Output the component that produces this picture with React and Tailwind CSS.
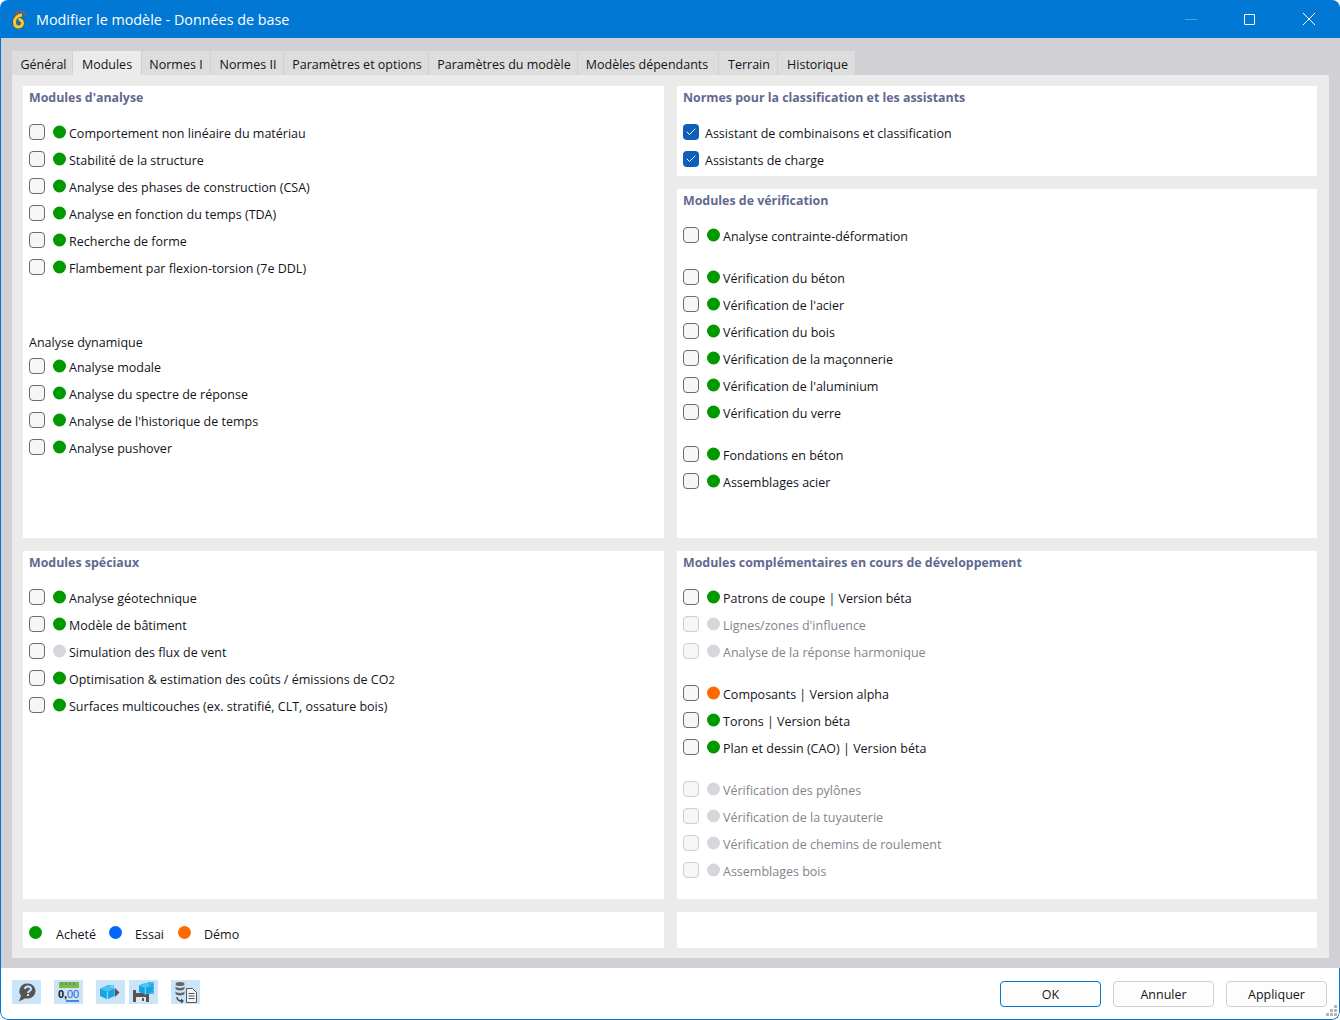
import { Check } from "lucide-react";

const GREEN = "bg-[#009900]";
const GREY = "bg-[#d6d6dc]";
const ORANGE = "bg-[#ff6a00]";

const TABS = [
  ["Général", "w-[61px] pl-[3px]"],
  ["Modules", "w-[69px]"],
  ["Normes I", "w-[69px]"],
  ["Normes II", "w-[73px] pl-[2px]"],
  ["Paramètres et options", "w-[145px] pl-[2px]"],
  ["Paramètres du modèle", "w-[149px] pl-[2px]"],
  ["Modèles dépendants", "w-[141px] pr-[2px]"],
  ["Terrain", "w-[59px] pl-[2px]"],
  ["Historique", "w-[78px] pl-[2px]"],
];

function Row({ label, dot = GREEN, disabled, checked, className = "" }) {
  return (
    <div className={`flex h-[27px] items-center ${className}`}>
      {checked ? (
        <span className="flex h-4 w-4 -translate-y-px items-center justify-center rounded-[4px] bg-[#0f5fb8]">
          <Check className="h-3 w-3 text-white" strokeWidth={2} />
        </span>
      ) : (
        <span
          className={`h-4 w-4 -translate-y-px rounded-[4px] border bg-[#f6f6f6] ${
            disabled ? "border-[#cfcfcf]" : "border-[#6b6b6b]"
          }`}
        />
      )}
      {dot && <span className={`ml-2 h-[13px] w-[13px] -translate-y-[0.5px] rounded-full ${dot}`} />}
      <span
        className={`${dot ? "ml-[3px]" : "ml-[6px]"} translate-y-0.5 whitespace-nowrap ${
          disabled ? "text-[#85848c]" : "text-[#14141a]"
        }`}
      >
        {label}
      </span>
    </div>
  );
}

function Panel({ title, children, className = "" }) {
  return (
    <section className={`bg-white px-[6px] ${className}`}>
      {title && (
        <h2 className="flex h-[25px] items-center text-[12.4px] font-bold text-[#62698f]">{title}</h2>
      )}
      <div className="pt-[8px]">{children}</div>
    </section>
  );
}

function IconButton({ children }) {
  return (
    <button className="flex h-6 w-[29px] items-center justify-center bg-[#cce4f7]">{children}</button>
  );
}

function Button({ label, primary }) {
  return (
    <button
      className={`h-[26px] w-[101px] rounded-[4px] border bg-[#fdfdfd] pt-[3px] text-[#14141a] ${
        primary ? "border-[#0078d4]" : "border-[#cfcfcf]"
      }`}
    >
      {label}
    </button>
  );
}

function Cube({ x = 0, y = 0, s = 1 }) {
  return (
    <g transform={`translate(${x} ${y}) scale(${s})`}>
      <path d="M0 4 7 1l7 3v7l-7 3-7-3z" fill="#12a5e6" />
      <path d="M7 1l7 3-7 3-7-3z" fill="#4cc3f0" />
      <path d="M7 7v7" stroke="#cfefff" strokeWidth=".8" />
    </g>
  );
}

export default function App() {
  return (
    <div className="relative h-[1020px] w-[1340px] overflow-hidden rounded-lg bg-white font-['Open_Sans','Noto_Sans',sans-serif] text-[12.5px]">
      <header className="flex h-[38px] items-center bg-[#0078d4] pl-[10px] text-white">
        <svg viewBox="0 0 18 20" className="h-5 w-[18px]">
          <path d="M3 7 7 1l8 1 3 6-6-3-5 1z" fill="#56698a" />
          <path
            d="M12 6C8 6 4.500 9 4.500 13c0 3 1.500 5 4 5s4-2 4-4-2-4-4-3.500"
            fill="none"
            stroke="#5d5a38"
            strokeWidth="4.600"
          />
          <path
            d="M12 6C8 6 4.500 9 4.500 13c0 3 1.500 5 4 5s4-2 4-4-2-4-4-3.500"
            fill="none"
            stroke="#f5cb3c"
            strokeWidth="3"
          />
        </svg>
        <h1 className="ml-[8px] translate-y-px text-[14.35px]">Modifier le modèle - Données de base</h1>
        <div className="ml-auto flex items-center">
          <span className="h-px w-3 bg-[#4ba3e3]" />
          <span className="ml-[47px] h-[11px] w-[11px] rounded-[1px] border border-white" />
          <svg viewBox="0 0 12 12" className="ml-[48px] mr-[25px] h-3 w-3" stroke="white" strokeWidth="1">
            <path d="M0 0 12 12M12 0 0 12" />
          </svg>
        </div>
      </header>

      <main className="h-[930px] border-l border-l-[#0078d4] bg-[#d1d0d5] pb-[10px] pl-[11px] pr-[11px] pt-[13px]">
        <nav className="flex h-6 items-stretch">
          {TABS.map(([label, width]) => (
            <div
              key={label}
              className={`flex items-center justify-center whitespace-nowrap border-r border-r-[#d1d0d5] pt-[4px] text-[#14141a] ${width} ${
                label === "Modules" ? "bg-[#ebebeb]" : "bg-[#dddddd]"
              }`}
            >
              {label}
            </div>
          ))}
        </nav>

        <div className="grid h-[883px] grid-cols-[641px_640px] grid-rows-[452px_348px_36px] gap-x-[13px] gap-y-[13px] bg-[#ebebeb] px-[11px] pt-[11px]">
          <Panel title="Modules d'analyse">
            <Row label="Comportement non linéaire du matériau" />
            <Row label="Stabilité de la structure" />
            <Row label="Analyse des phases de construction (CSA)" />
            <Row label="Analyse en fonction du temps (TDA)" />
            <Row label="Recherche de forme" />
            <Row label="Flambement par flexion-torsion (7e DDL)" />
            <div className="mt-[47px] flex h-[27px] translate-y-0.5 items-center text-[#14141a]">Analyse dynamique</div>
            <div className="-mt-[2px]">
              <Row label="Analyse modale" />
              <Row label="Analyse du spectre de réponse" />
              <Row label="Analyse de l'historique de temps" />
              <Row label="Analyse pushover" />
            </div>
          </Panel>

          <div className="flex flex-col gap-[13px]">
            <Panel title="Normes pour la classification et les assistants" className="h-[90px]">
              <Row checked dot={null} label="Assistant de combinaisons et classification" />
              <Row checked dot={null} label="Assistants de charge" />
            </Panel>
            <Panel title="Modules de vérification" className="flex-1">
              <Row label="Analyse contrainte-déformation" />
              <Row className="mt-[15px]" label="Vérification du béton" />
              <Row label="Vérification de l'acier" />
              <Row label="Vérification du bois" />
              <Row label="Vérification de la maçonnerie" />
              <Row label="Vérification de l'aluminium" />
              <Row label="Vérification du verre" />
              <Row className="mt-[15px]" label="Fondations en béton" />
              <Row label="Assemblages acier" />
            </Panel>
          </div>

          <Panel title="Modules spéciaux">
            <Row label="Analyse géotechnique" />
            <Row label="Modèle de bâtiment" />
            <Row dot={GREY} label="Simulation des flux de vent" />
            <Row label={<>Optimisation &amp; estimation des coûts / émissions de CO<span className="text-[11px]">2</span></>} />
            <Row label="Surfaces multicouches (ex. stratifié, CLT, ossature bois)" />
          </Panel>

          <Panel title="Modules complémentaires en cours de développement">
            <Row label="Patrons de coupe | Version béta" />
            <Row disabled dot={GREY} label="Lignes/zones d'influence" />
            <Row disabled dot={GREY} label="Analyse de la réponse harmonique" />
            <Row className="mt-[15px]" dot={ORANGE} label="Composants | Version alpha" />
            <Row label="Torons | Version béta" />
            <Row label="Plan et dessin (CAO) | Version béta" />
            <Row className="mt-[15px]" disabled dot={GREY} label="Vérification des pylônes" />
            <Row disabled dot={GREY} label="Vérification de la tuyauterie" />
            <Row disabled dot={GREY} label="Vérification de chemins de roulement" />
            <Row disabled dot={GREY} label="Assemblages bois" />
          </Panel>

          <section className="flex items-center bg-white pl-[7px] pt-[8px] text-[#14141a]">
            <span className="h-[13px] w-[13px] -translate-y-[2px] -translate-x-px rounded-full bg-[#009900]" />
            <span className="ml-[13px] translate-y-px">Acheté</span>
            <span className="ml-[13px] h-[13px] w-[13px] -translate-y-[2px] rounded-full bg-[#0066ff]" />
            <span className="ml-[13px] translate-y-px">Essai</span>
            <span className="ml-[14px] h-[13px] w-[13px] -translate-y-[2px] rounded-full bg-[#ff6a00]" />
            <span className="ml-[13px] translate-y-px">Démo</span>
          </section>
          <section className="bg-white" />
        </div>
      </main>

      <footer className="flex h-[52px] items-start rounded-b-lg border-x border-b border-[#0078d4] pl-[11px] pr-[12px] pt-[12px]">
        <div className="flex">
          <IconButton>
            <svg viewBox="0 0 20 20" className="h-5 w-5">
              <path d="M11 1.500a7.500 7.500 0 0 1 0 15H8l-6 3 2-6a7.500 7.500 0 0 1 7-12z" fill="#555" />
              <path d="M8 7c0-3.500 6-3.500 6 0 0 2-3 2-3 4" fill="none" stroke="#cce4f7" strokeWidth="2" />
              <rect x="10" y="12" width="2" height="2" fill="#cce4f7" />
            </svg>
          </IconButton>
          <div className="ml-[13px]">
            <IconButton>
              <svg viewBox="0 0 24 22" className="h-[22px] w-6">
                <rect x="2" y="1" width="20" height="6" fill="#7cb84a" />
                <path d="M5 1v3M9 1v3M13 1v3M17 1v3" stroke="#4d8a2a" />
                <text x="1" y="17" fontSize="11" fontWeight="700" fontFamily="Liberation Sans" fill="#111">0,</text>
                <text x="10" y="17" fontSize="11" fontFamily="Liberation Sans" fill="#2a5fd0">00</text>
                <path d="M9 20h13" stroke="#2a5fd0" strokeWidth="1.400" />
              </svg>
            </IconButton>
          </div>
          <div className="ml-[13px]">
            <IconButton>
              <svg viewBox="0 0 29 24" className="h-6 w-[29px]">
                <rect x="11" y="5" width="7" height="11" fill="#4cc3f0" />
                <path d="M12 7h5M12 9.500h5M12 12h5" stroke="#e8f8ff" />
                <Cube x={4} y={4.500} s={1.050} />
                <path d="M19 8l4.500 4.500L19 17z" fill="#555" />
              </svg>
            </IconButton>
          </div>
          <div className="ml-[4px]">
            <IconButton>
              <svg viewBox="0 0 29 24" className="h-6 w-[29px]">
                <path d="M4 10h13l3 3v9H4z" fill="#555" />
                <rect x="7" y="17" width="10" height="5" fill="#dfe8ef" />
                <rect x="13" y="18" width="2" height="3" fill="#555" />
                <rect x="7" y="10" width="7" height="3" fill="#d9d9d9" />
                <rect x="18" y="2" width="7" height="12" fill="#4cc3f0" />
                <path d="M20.500 2v12M23 2v12M18 5h7M18 8h7M18 11h7" stroke="#1b7fb5" strokeWidth=".6" />
                <Cube x={10} y={2} s={0.9} />
              </svg>
            </IconButton>
          </div>
          <div className="ml-[13px]">
            <IconButton>
              <svg viewBox="0 0 29 24" className="h-6 w-[29px]">
                <ellipse cx="9" cy="4" rx="4.500" ry="2" fill="#666" />
                <path d="M4.500 6c0 2.600 9 2.600 9 0v2.500c0 2.600-9 2.600-9 0zM4.500 11c0 2.600 9 2.600 9 0v2.500c0 2.600-9 2.600-9 0z" fill="#666" />
                <path d="M6 17c0 3 2 4 5 4" fill="none" stroke="#444" strokeWidth="1.400" />
                <path d="M10 18.500l3 2.500-3 2.500z" fill="#444" />
                <path d="M15.500 8.500h6l4 4v10h-10z" fill="#f4f4f4" stroke="#555" />
                <path d="M17.500 13.500h6M17.500 16h6M17.500 18.500h6" stroke="#555" />
              </svg>
            </IconButton>
          </div>
        </div>
        <div className="ml-auto mt-[1px] flex gap-3">
          <Button primary label="OK" />
          <Button label="Annuler" />
          <Button label="Appliquer" />
        </div>
      </footer>
      <svg viewBox="0 0 12 12" className="absolute bottom-[3px] right-[2px] h-3 w-3" fill="#b5b5b5">
        <rect x="8" y="0" width="3" height="3" />
        <rect x="4" y="4" width="3" height="3" />
        <rect x="8" y="4" width="3" height="3" />
        <rect x="0" y="8" width="3" height="3" />
        <rect x="4" y="8" width="3" height="3" />
        <rect x="8" y="8" width="3" height="3" />
      </svg>
    </div>
  );
}
